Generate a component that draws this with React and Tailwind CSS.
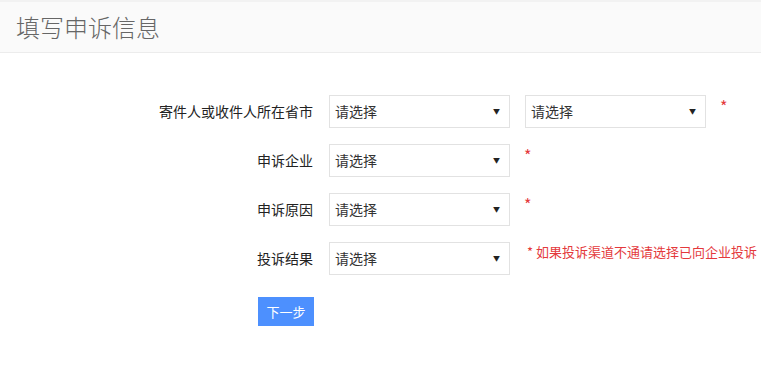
import React from "react";

const font = { fontFamily: '"Microsoft YaHei", "Noto Sans CJK SC", sans-serif' };

const Select = ({ className = "" }) => (
  <div
    className={`flex h-[33px] w-[181px] items-center justify-between border border-[#e2e2e2] bg-white pl-[5px] pr-[9px] text-[14px] text-[#333] ${className}`}
  >
    <span>请选择</span>
    <span className="text-[7px] text-[#222]">▼</span>
  </div>
);

const Row = ({ label, children }) => (
  <div className="flex items-center">
    <label className="w-[314px] pr-[1px] text-right text-[14px] text-[#222]">{label}</label>
    <div className="ml-[15px] flex h-[33px] items-center">{children}</div>
  </div>
);

export default function App() {
  return (
    <div className="min-h-[388px] w-full bg-white" style={font}>
      <div className="h-[53px] border-t-2 border-b border-t-[#f2f2f2] border-b-[#ececec] bg-[#fafafa] pl-[16px]">
        <h1 className="pt-[9px] text-[24px] font-extralight leading-[32px] text-[#666]">填写申诉信息</h1>
      </div>
      <div className="flex flex-col gap-[16px] pt-[42px]">
        <Row label="寄件人或收件人所在省市">
          <Select />
          <Select className="ml-[15px]" />
          <span className="ml-[14px] self-start pt-[3px] text-[16px] leading-[16px] text-[#e4393c]">*</span>
        </Row>
        <Row label="申诉企业">
          <Select />
          <span className="ml-[14px] self-start pt-[3px] text-[16px] leading-[16px] text-[#e4393c]">*</span>
        </Row>
        <Row label="申诉原因">
          <Select />
          <span className="ml-[14px] self-start pt-[3px] text-[16px] leading-[16px] text-[#e4393c]">*</span>
        </Row>
        <Row label="投诉结果">
          <Select />
          <span className="ml-[17px] mb-[14px] text-[13px] text-[#e4393c]">* 如果投诉渠道不通请选择已向企业投诉</span>
        </Row>
      </div>
      <div className="pl-[258px] pt-[22px]">
        <button className="h-[29px] w-[56px] bg-[#4d90fe] text-[13px] text-white">下一步</button>
      </div>
    </div>
  );
}
